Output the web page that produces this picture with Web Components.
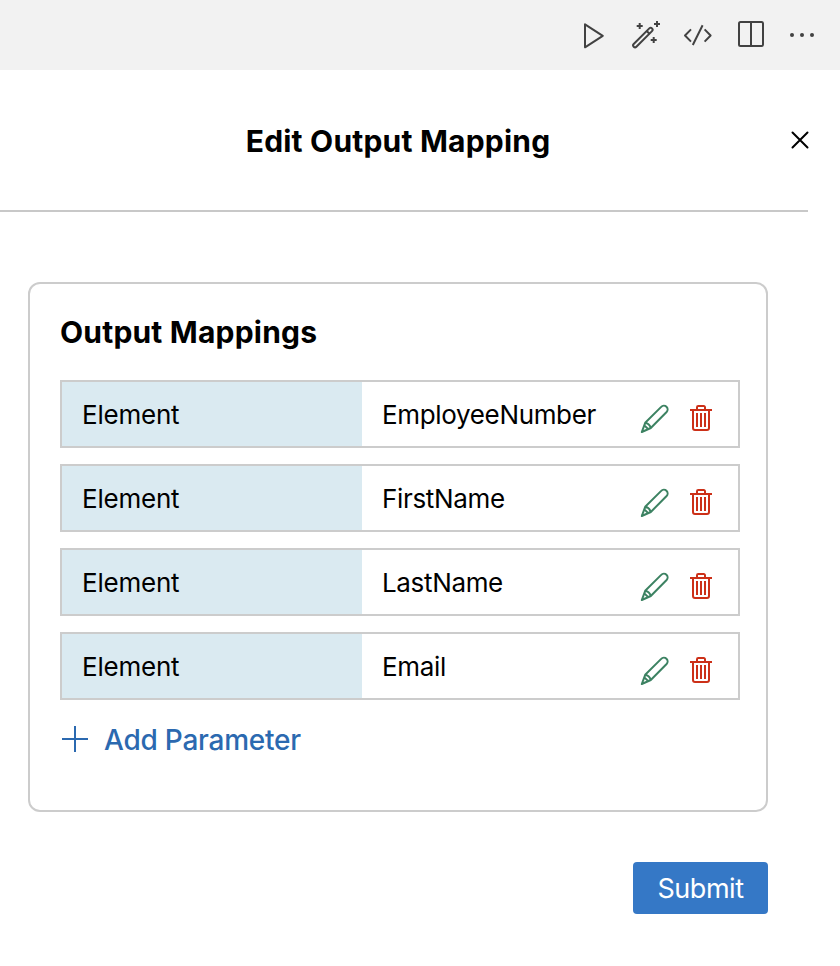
<!DOCTYPE html>
<html lang="en">
<head>
<meta charset="utf-8">
<title>Edit Output Mapping</title>
<style>
  body { margin: 0; background: #fff; color: #000; font-family: Inter, "Liberation Sans", sans-serif; }
</style>
</head>
<body>
<mapping-app></mapping-app>
<script>
const define = (name, html) => {
  const template = document.createElement('template');
  template.innerHTML = html;
  customElements.define(name, class extends HTMLElement {
    constructor() {
      super();
      this.attachShadow({ mode: 'open' }).append(template.content.cloneNode(true));
    }
  });
};

define('editor-toolbar', `
  <style>
    :host { display: flex; justify-content: flex-end; align-items: center; box-sizing: border-box; height: 70px; padding-right: 22px; gap: 22px; background: #f2f2f2; color: #424242; }
    svg { display: block; width: 30px; height: 30px; overflow: visible; fill: none; stroke: currentColor; stroke-width: 2; stroke-linejoin: round; stroke-linecap: round; }
  </style>
  <svg viewBox="580 20 30 30"><path d="M585 24.3 602.8 35.8 585 47.3Z"/></svg>
  <svg viewBox="632 20 30 30"><path stroke-width="2" d="M633.7 44 649.3 28.4A1.9 1.9 0 0 1 652 31.1L636.4 46.7A1.9 1.9 0 0 1 633.7 44ZM646.7 31 649.4 33.7"/><path stroke-linecap="butt" d="M636.7 26h6M639.7 23v6M654 24h6M657 21v6M650.7 40h6M653.7 37v6"/></svg>
  <svg viewBox="684 20 30 30"><path stroke-linecap="butt" d="M691 29.4 685 35.5 691 41.6M702.6 25.3 692.8 45M704.6 29.4 710.6 35.5 704.6 41.6"/></svg>
  <svg viewBox="736 20 30 30"><path d="M740.5 22h21a1.5 1.5 0 0 1 1.5 1.5v21a1.5 1.5 0 0 1-1.5 1.5h-21a1.5 1.5 0 0 1-1.5-1.5v-21a1.5 1.5 0 0 1 1.5-1.5ZM751 22v24"/></svg>
  <svg viewBox="788 20 30 30"><g fill="currentColor" stroke="none"><circle cx="792" cy="35" r="2"/><circle cx="802" cy="35" r="2"/><circle cx="812" cy="35" r="2"/></g></svg>
`);

define('panel-header', `
  <style>
    :host { display: grid; grid-template-columns: 1fr 18px; align-items: center; box-sizing: border-box; width: 808px; height: 142px; border-bottom: 2px solid #c8c8c8; }
    h1 { margin: 0; padding: 2px 0 0 6px; text-align: center; font-size: 30px; line-height: 36px; font-weight: 700; letter-spacing: .2px; white-space: nowrap; }
    svg { display: block; width: 18px; height: 18px; margin-left: 1px; fill: none; stroke: #000; stroke-width: 2; stroke-linecap: round; }
  </style>
  <h1><slot></slot></h1>
  <svg viewBox="0 0 18 18"><path d="m1.5 1.5 15 15m0-15-15 15"/></svg>
`);

define('mapping-row', `
  <style>
    :host { display: grid; grid-template-columns: 300px 1fr auto; box-sizing: border-box; height: 68px; border: 2px solid #ccc; font-size: 26px; line-height: 66px; }
    .kind, .name { height: 64px; padding-left: 20px; }
    .kind { background: #daeaf1; letter-spacing: -.22px; }
    .name { letter-spacing: -.34px; }
    .actions { display: flex; align-items: center; gap: 20px; height: 56px; padding: 8px 26px 0 0; }
    svg { display: block; overflow: visible; fill: none; stroke-width: 2; stroke-linejoin: round; }
  </style>
  <div class="kind"><slot name="kind"></slot></div>
  <div class="name"><slot></slot></div>
  <div class="actions">
    <svg width="30" height="30" viewBox="0 -1 30 30" stroke="#3c8262"><path d="M1.8 28 5.2 18.8 21.2 2.9A3.6 3.6 0 0 1 26.6 8L10.8 24Z M5.2 18.8 Q9.5 19.6 10.8 24 M4.6 21.6 7.8 24.8"/></svg>
    <svg width="22" height="28" viewBox="0 0 22 28" stroke="#cc3018"><path d="M0 6h22M7 6V3.2A1.2 1.2 0 0 1 8.2 2h5.6A1.2 1.2 0 0 1 15 3.2V6M3 6v18a2 2 0 0 0 2 2h12a2 2 0 0 0 2-2V6M7 9v14M11 9v14M15 9v14"/></svg>
  </div>
`);

define('add-button', `
  <style>
    :host { display: flex; align-items: center; gap: 16px; height: 46px; padding-left: 2px; color: #2b69b0; font-size: 28px; font-weight: 500; line-height: 40px; letter-spacing: -.23px; }
    span { padding-top: 2px; }
    svg { display: block; stroke: currentColor; stroke-width: 2; }
  </style>
  <svg width="26" height="26" viewBox="0 0 26 26"><path d="M0 13h26M13 0v26"/></svg>
  <span><slot></slot></span>
`);

define('mapping-card', `
  <style>
    :host { display: flex; flex-direction: column; gap: 16px; box-sizing: border-box; width: 740px; height: 530px; margin: 70px 0 0 28px; padding: 30px 26px 30px 30px; border: 2px solid #ccc; border-radius: 12px; }
    h2 { margin: 0 0 14px; font-size: 30px; line-height: 36px; font-weight: 700; letter-spacing: .2px; }
  </style>
  <h2><slot name="title"></slot></h2>
  <slot></slot>
`);

define('submit-button', `
  <style>
    :host { display: flex; justify-content: center; width: 135px; height: 52px; margin: 50px 0 0 633px; border-radius: 4px; background: #3578c6; color: #fff; font-size: 27px; line-height: 54px; letter-spacing: -.45px; }
  </style>
  <span><slot></slot></span>
`);

define('mapping-app', `
  <style>
    :host { display: block; width: 840px; height: 966px; overflow: hidden; }
  </style>
  <editor-toolbar></editor-toolbar>
  <panel-header>Edit Output Mapping</panel-header>
  <mapping-card>
    <span slot="title">Output Mappings</span>
    <mapping-row><span slot="kind">Element</span>EmployeeNumber</mapping-row>
    <mapping-row><span slot="kind">Element</span>FirstName</mapping-row>
    <mapping-row><span slot="kind">Element</span>LastName</mapping-row>
    <mapping-row><span slot="kind">Element</span>Email</mapping-row>
    <add-button>Add Parameter</add-button>
  </mapping-card>
  <submit-button>Submit</submit-button>
`);
</script>
</body>
</html>
